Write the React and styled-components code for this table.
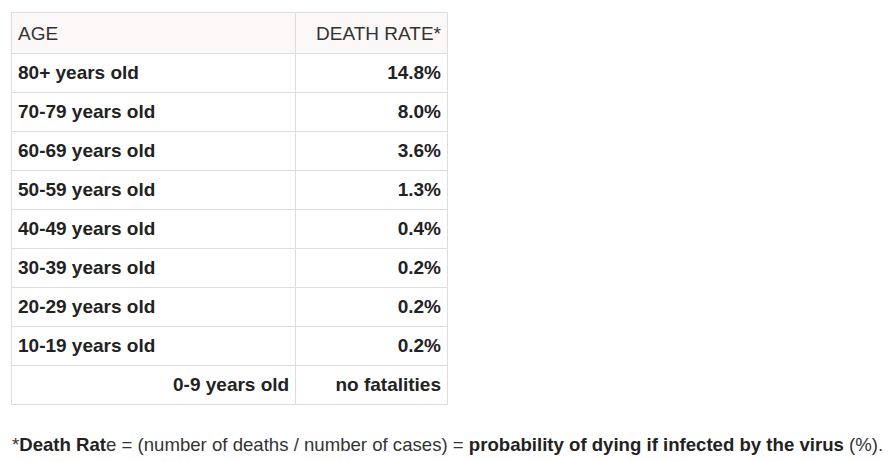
import React from "react";
import styled, { createGlobalStyle } from "styled-components";

const Global = createGlobalStyle`
  html, body { margin: 0; padding: 0; background: #fff; }
  body { font-family: "Liberation Sans", Arial, sans-serif; color: #222; }
`;

const Page = styled.div`
  padding: 12px 0 0 11px;
`;

const Table = styled.table`
  border-collapse: collapse;
  width: 437px;
  font-size: 19px;
`;

const Cell = styled.td`
  border: 1px solid #dddddd;
  padding: 0 6px;
  height: 39px;
  line-height: 22px;
  text-align: ${(p) => (p.$right ? "right" : "left")};
  font-weight: ${(p) => (p.$bold ? "bold" : "normal")};
  color: #222;
  box-sizing: border-box;
`;

const HeadCell = styled(Cell).attrs({ as: "th" })`
  background: #fcf8f8;
  height: 41px;
  font-weight: normal;
  color: #333;
  padding-top: 1px;
`;

const Note = styled.p`
  margin: 29px 0 0 1px;
  font-size: 18.6px;
  white-space: nowrap;
  color: #333;
`;

const Strong = styled.b`
  color: #222;
`;

const rows = [
  ["80+ years old", "14.8%"],
  ["70-79 years old", "8.0%"],
  ["60-69 years old", "3.6%"],
  ["50-59 years old", "1.3%"],
  ["40-49 years old", "0.4%"],
  ["30-39 years old", "0.2%"],
  ["20-29 years old", "0.2%"],
  ["10-19 years old", "0.2%"],
];

export default function App() {
  return (
    <Page>
      <Global />
      <Table>
        <colgroup>
          <col style={{ width: 285 }} />
          <col style={{ width: 152 }} />
        </colgroup>
        <thead>
          <tr>
            <HeadCell>AGE</HeadCell>
            <HeadCell $right>DEATH RATE*</HeadCell>
          </tr>
        </thead>
        <tbody>
          {rows.map(([a, r]) => (
            <tr key={a}>
              <Cell $bold>{a}</Cell>
              <Cell $bold $right>{r}</Cell>
            </tr>
          ))}
          <tr>
            <Cell $bold $right>0-9 years old</Cell>
            <Cell $bold $right>no fatalities</Cell>
          </tr>
        </tbody>
      </Table>
      <Note>
        *<Strong>Death Rat</Strong>e = (number of deaths / number of cases) ={" "}
        <Strong>probability of dying if infected by the virus</Strong> (%).
      </Note>
    </Page>
  );
}
